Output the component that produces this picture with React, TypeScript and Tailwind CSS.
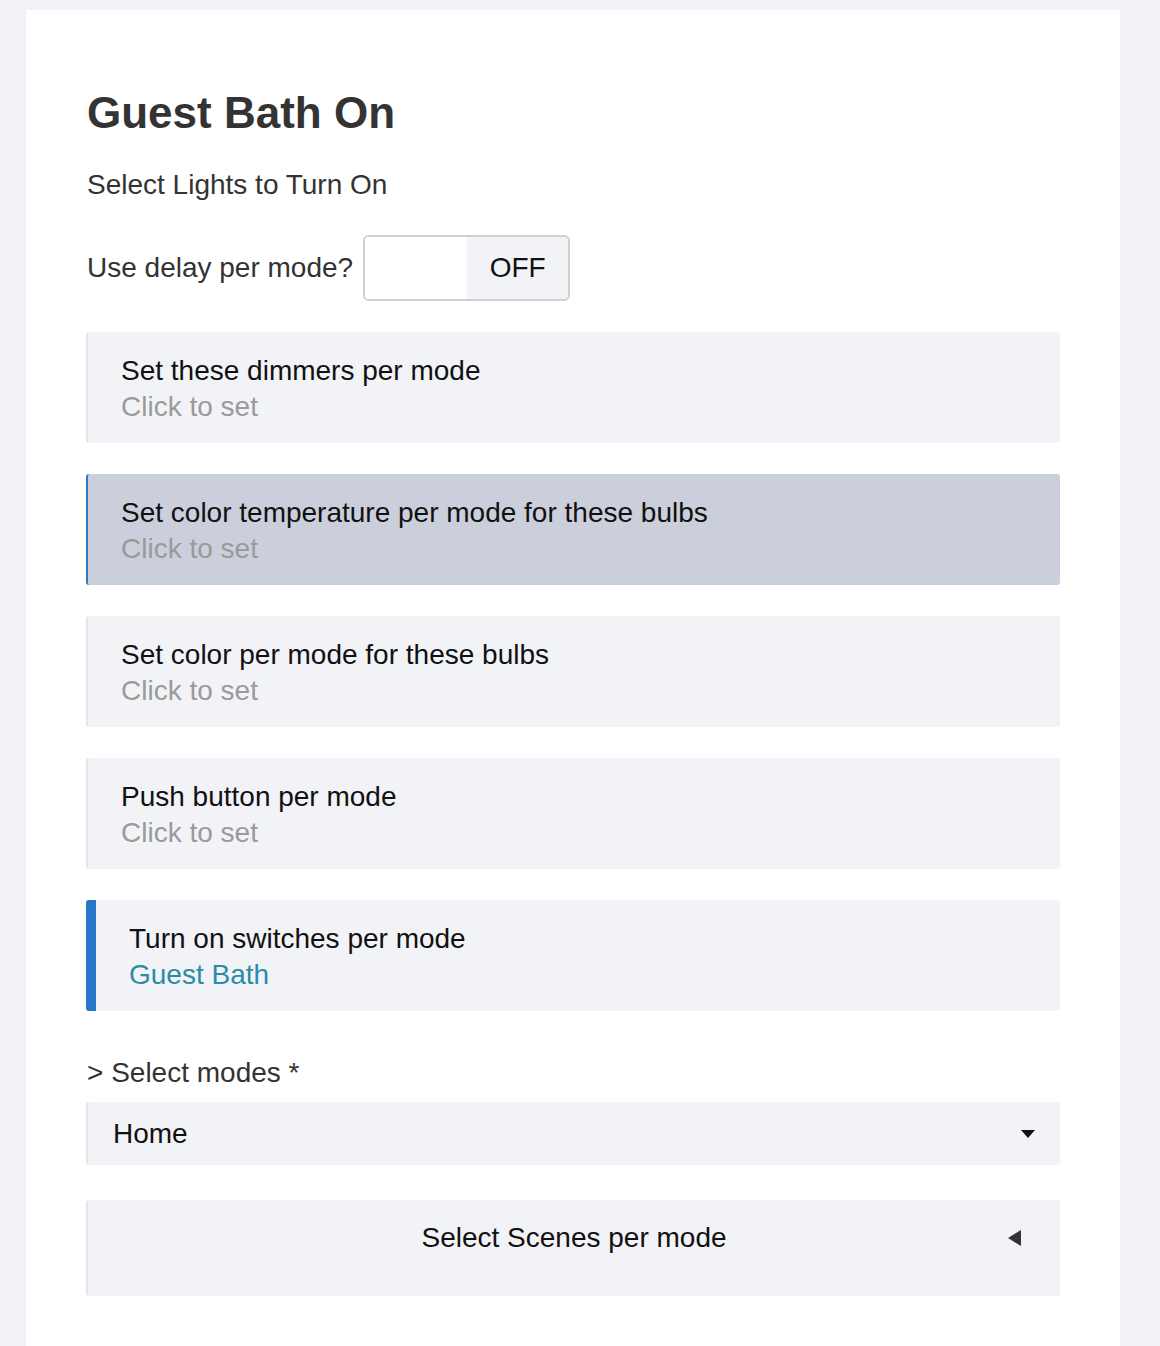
import React from "react";

type Item = {
  title: string;
  value: string;
  kind: "plain" | "hover" | "set";
};

const items: Item[] = [
  { title: "Set these dimmers per mode", value: "Click to set", kind: "plain" },
  { title: "Set color temperature per mode for these bulbs", value: "Click to set", kind: "hover" },
  { title: "Set color per mode for these bulbs", value: "Click to set", kind: "plain" },
  { title: "Push button per mode", value: "Click to set", kind: "plain" },
  { title: "Turn on switches per mode", value: "Guest Bath", kind: "set" },
];

function SettingItem({ item }: { item: Item }) {
  const box =
    item.kind === "set"
      ? "border-l-[10px] border-[#2677c9] bg-[#f2f3f7] pl-[33px]"
      : item.kind === "hover"
        ? "border-l-2 border-[#2a7bc8] bg-[#cbcfdb] pl-[33px]"
        : "border-l-2 border-[#e4e5ea] bg-[#f2f3f7] pl-[33px]";
  return (
    <div className={`h-[111px] rounded-[3px] pt-[21px] pb-[18px] pr-6 ${box}`}>
      <div className="text-[28px] leading-[36px] text-[#111]">{item.title}</div>
      <div
        className={`text-[28px] leading-[36px] ${
          item.kind === "set" ? "text-[#2b8ba8]" : "text-[#9a9a9a]"
        }`}
      >
        {item.value}
      </div>
    </div>
  );
}

export default function App() {
  return (
    <div
      className="min-h-screen bg-[#f2f3f7] pt-[10px] pl-[26px] pr-[40px]"
      style={{ fontFamily: '"Liberation Sans", Arial, sans-serif' }}
    >
      <div className="min-h-[1336px] w-[1094px] bg-white pt-[77px] pl-[60px] pr-[60px] pb-12">
        <h1 className="pl-px text-[44px] font-bold leading-[52px] text-[#333]">Guest Bath On</h1>
        <p className="mt-[28px] pl-px text-[28px] leading-[36px] text-[#333]">Select Lights to Turn On</p>

        <div className="mt-[32px] flex items-center pl-px">
          <span className="text-[28px] leading-[36px] text-[#333]">Use delay per mode?</span>
          <div className="ml-[10px] flex h-[66px] w-[207px] overflow-hidden rounded-[6px] border-2 border-[#cfcfcf]">
            <div className="w-[102px] bg-white" />
            <div className="flex flex-1 items-center justify-center bg-[#f2f3f7] text-[28px] text-[#111]">
              OFF
            </div>
          </div>
        </div>

        <div className="mt-[31px] flex w-[974px] flex-col gap-[31px]">
          {items.map((item) => (
            <SettingItem key={item.title} item={item} />
          ))}
        </div>

        <div className="mt-[44px] pl-px text-[28px] leading-[36px] text-[#333]">&gt; Select modes *</div>
        <div className="mt-[11px] flex h-[63px] w-[974px] items-center justify-between rounded-[3px] border-l-2 border-[#e4e5ea] bg-[#f2f3f7] pl-[25px] pr-[24px]">
          <span className="text-[28px] leading-[36px] text-[#111]">Home</span>
          <svg width="16" height="10" viewBox="0 0 16 10" className="mt-[1px]">
            <polygon points="1,1 15,1 8,9" fill="#111" />
          </svg>
        </div>

        <div className="mt-[35px] flex h-[96px] w-[974px] items-start rounded-[3px] border-l-2 border-[#e4e5ea] bg-[#f2f3f7] pt-[20px]">
          <div className="relative flex-1 text-center text-[28px] leading-[36px] text-[#111]">
            Select Scenes per mode
            <svg
              width="16"
              height="18"
              viewBox="0 0 16 18"
              className="absolute right-[38px] top-[9px]"
            >
              <polygon points="15,1 15,17 2,9" fill="#333" />
            </svg>
          </div>
        </div>
      </div>
    </div>
  );
}
